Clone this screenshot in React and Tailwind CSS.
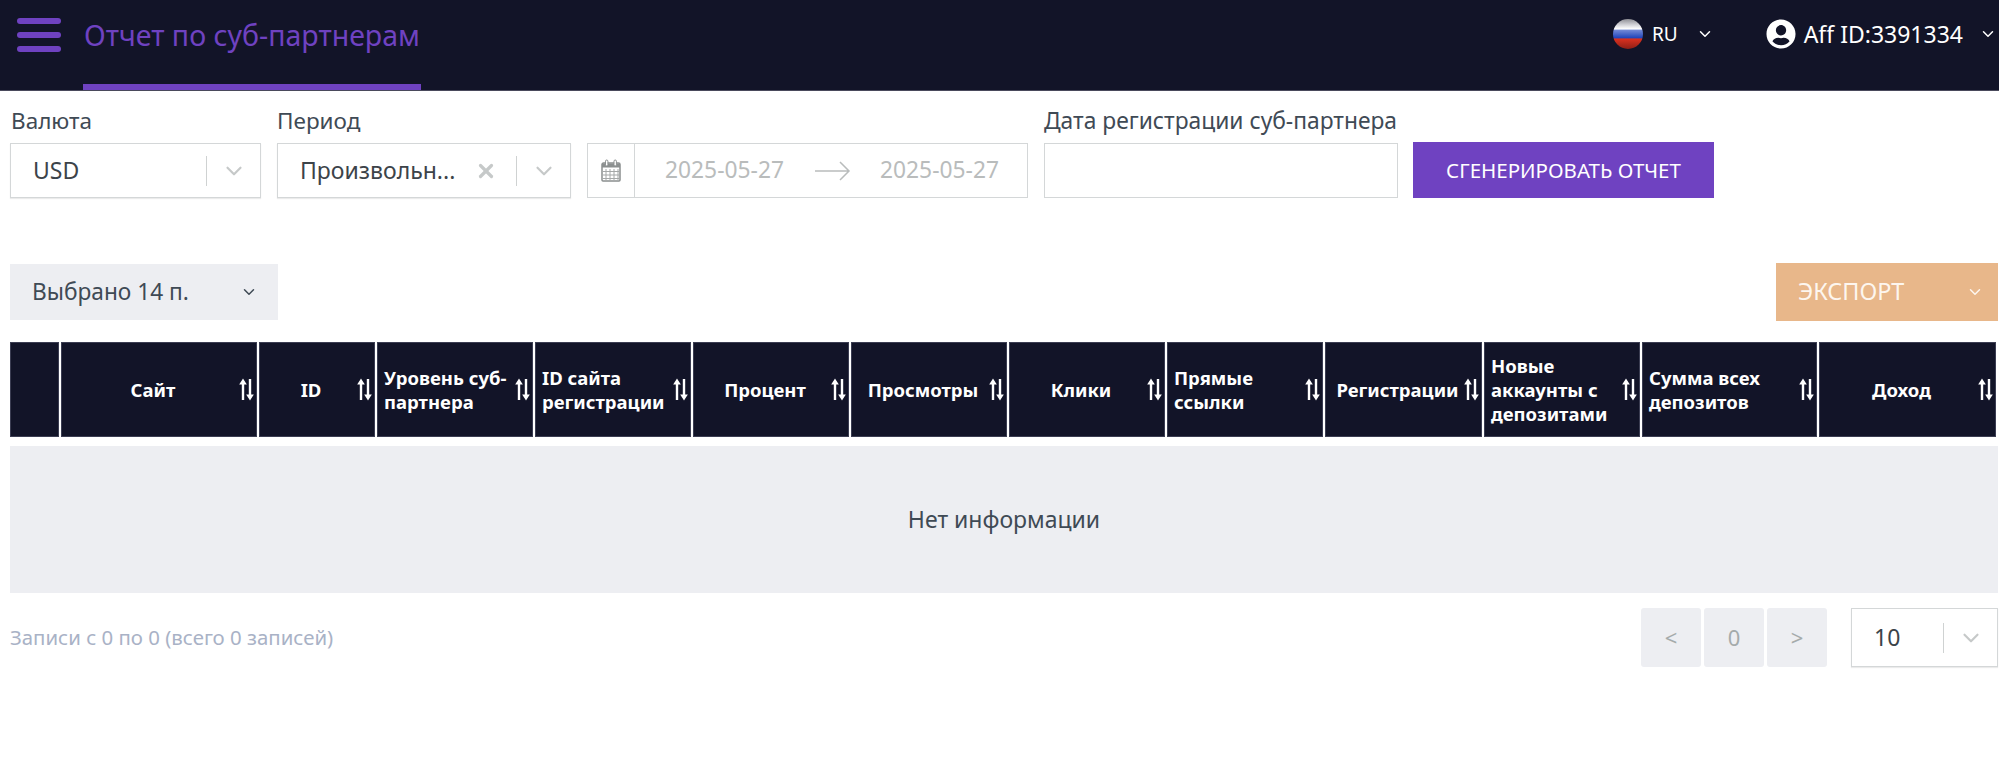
import React from 'react';
import { ChevronDown, X } from 'lucide-react';
import { FaUserCircle } from 'react-icons/fa';

const columns = [
  { title: '' },
  { title: 'Сайт', center: true },
  { title: 'ID', center: true },
  { title: 'Уровень суб-партнера' },
  { title: 'ID сайта регистрации' },
  { title: 'Процент', center: true },
  { title: 'Просмотры', center: true },
  { title: 'Клики', center: true },
  { title: 'Прямые ссылки' },
  { title: 'Регистрации', center: true },
  { title: 'Новые аккаунты с депозитами' },
  { title: 'Сумма всех депозитов' },
  { title: 'Доход', center: true },
];

const SortIcon = () => (
  <svg width="17" height="25" viewBox="0 0 17 25" className="shrink-0" fill="none">
    <path d="M5 23V4" stroke="#fff" strokeWidth="2.4" />
    <path d="M1.2 7.5 5 1.5 8.8 7.5Z" fill="#fff" />
    <path d="M12 2v19" stroke="#fff" strokeWidth="2.4" />
    <path d="M8.2 17.5 12 23.5 15.8 17.5Z" fill="#fff" />
  </svg>
);

const Flag = () => (
  <svg width="30" height="30" viewBox="0 0 30 30">
    <defs>
      <linearGradient id="gloss" x1="0" y1="0" x2="0" y2="1">
        <stop offset="0" stopColor="#8f8f95" />
        <stop offset="0.2" stopColor="#d5d5da" />
        <stop offset="0.33" stopColor="#ffffff" />
        <stop offset="0.38" stopColor="#6f86d6" />
        <stop offset="0.62" stopColor="#2347bb" />
        <stop offset="0.67" stopColor="#d8301f" />
        <stop offset="1" stopColor="#8e1f16" />
      </linearGradient>
    </defs>
    <circle cx="15" cy="15" r="15" fill="url(#gloss)" />
  </svg>
);

const CalendarIcon = () => (
  <svg width="20" height="23" viewBox="0 0 20 23" fill="none">
    <path d="M1 5.5a1.5 1.5 0 0 1 1.5-1.5h15A1.5 1.5 0 0 1 19 5.5V21a1 1 0 0 1-1 1H2a1 1 0 0 1-1-1Z" fill="#fff" stroke="#8b8f8f" strokeWidth="1.5" />
    <path d="M1 4.5h18v4H1Z" fill="#8b8f8f" />
    <path d="M5 10v11M9 10v11M13 10v11M17 10v11M2 12.5h16M2 16h16M2 19.5h16" stroke="#a5a8a8" strokeWidth="1" />
    <rect x="4.5" y="1" width="2.4" height="6" rx="1.2" fill="#fff" stroke="#8b8f8f" />
    <rect x="13" y="1" width="2.4" height="6" rx="1.2" fill="#fff" stroke="#8b8f8f" />
  </svg>
);

const SelectBox = ({ value, className, clearable }) => (
  <div className={`flex items-center border border-[#d4d7d8] bg-white shadow-[0_1px_1px_rgba(0,0,0,0.08)] ${className}`}>
    <span className="flex-1 truncate pl-[22px] text-[23px] text-[#3c4349]">{value}</span>
    {clearable && <X size={22} strokeWidth={3.5} className="mr-[19px] text-[#c6c9c9]" />}
    <span className="h-[30px] w-px bg-[#cfd2d2]" />
    <span className="flex w-[53px] justify-center">
      <ChevronDown size={26} strokeWidth={2} className="text-[#c6c9c9]" />
    </span>
  </div>
);

const App = () => {
  return (
    <div className="min-h-[775px] bg-white font-['Noto_Sans',sans-serif] text-[#3f4a55]">
      {/* Top bar */}
      <header className="flex h-[91px] items-start justify-between border-b border-[#4a4a5c] bg-[#121428]">
        <div className="flex h-[90px] items-start">
          <div className="ml-[17px] mt-[18px] flex w-[44px] flex-col gap-[8px]">
            <span className="h-[6px] rounded-full bg-[#6f42c1]" />
            <span className="h-[6px] rounded-full bg-[#6f42c1]" />
            <span className="h-[6px] rounded-full bg-[#6f42c1]" />
          </div>
          <div className="ml-[22px] flex h-[90px] w-[338px] items-start justify-center whitespace-nowrap border-b-[6px] border-[#6f42c1] pt-[15px] text-[28.5px] leading-[40px] text-[#6f42c1]">
            Отчет по суб-партнерам
          </div>
        </div>
        <div className="flex items-center pt-[19px] text-white">
          <Flag />
          <span className="ml-[9px] text-[19px] leading-[30px]">RU</span>
          <ChevronDown size={18} strokeWidth={2} className="ml-[18px]" />
          <FaUserCircle size={30} className="ml-[52px]" />
          <span className="ml-[8px] text-[23px] leading-[30px]">Aff ID:3391334</span>
          <ChevronDown size={18} strokeWidth={2} className="ml-[16px] mr-[2px]" />
        </div>
      </header>

      <main className="pl-[10px] pr-px">
        {/* Filters */}
        <div className="flex items-end pt-[12px]">
          <div className="w-[251px]">
            <div className="h-[40px] pl-px text-[22.5px] leading-[36px]">Валюта</div>
            <SelectBox value="USD" className="h-[55px]" />
          </div>
          <div className="ml-[16px] w-[294px]">
            <div className="h-[40px] text-[22.5px] leading-[36px]">Период</div>
            <SelectBox value="Произвольн..." className="h-[55px]" clearable />
          </div>
          <div className="ml-[16px] flex h-[55px] w-[441px] items-center border border-[#d4d7d8] text-[22.8px] text-[#b9bcbc]">
            <span className="flex h-full w-[47px] items-center justify-center border-r border-[#d4d7d8]">
              <CalendarIcon />
            </span>
            <span className="ml-[30px]">2025-05-27</span>
            <svg width="36" height="22" viewBox="0 0 36 22" fill="none" className="ml-[31px]">
              <path d="M0 11h34M25 2l9 9-9 9" stroke="#b9bcbc" strokeWidth="1.5" />
            </svg>
            <span className="ml-[29px]">2025-05-27</span>
          </div>
          <div className="ml-[16px] w-[354px]">
            <div className="h-[40px] whitespace-nowrap text-[22.8px] leading-[36px]">Дата регистрации суб-партнера</div>
            <div className="h-[55px] border border-[#d4d7d8] bg-white" />
          </div>
          <button className="ml-[15px] h-[56px] w-[301px] bg-[#6f42c1] text-[20.5px] text-white">
            СГЕНЕРИРОВАТЬ ОТЧЕТ
          </button>
        </div>

        {/* Columns picker and export */}
        <div className="mt-[65px] flex items-center justify-between">
          <div className="flex h-[56px] w-[268px] items-center justify-between bg-[#edeef2] pl-[22px] pr-[20px] text-[22.7px]">
            Выбрано 14 п.
            <ChevronDown size={18} strokeWidth={2} />
          </div>
          <div className="flex h-[58px] w-[222px] items-center justify-between bg-[#e8b78a] pl-[22px] pr-[14px] text-[23.4px] text-[#fdf6ef]">
            ЭКСПОРТ
            <ChevronDown size={18} strokeWidth={2} />
          </div>
        </div>

        {/* Table head */}
        <div className="mt-[21px] grid h-[95px] grid-cols-[51px_198px_118px_158px_158px_158px_158px_158px_158px_159px_158px_177px_1fr]">
          {columns.map((col, i) => (
            <div
              key={i}
              className={`flex items-center border-r-2 border-white bg-[#121428] pl-[7px] pr-[2px] text-[18.5px] font-bold leading-[24px] text-white shadow-[inset_0_0_0_1px_#3b3d52] ${i === 12 ? 'border-r-0' : ''}`}
            >
              {col.title && (
                <>
                  <span className={`min-w-0 flex-1 ${col.center ? 'text-center' : ''}`}>{col.title}</span>
                  <SortIcon />
                </>
              )}
            </div>
          ))}
        </div>

        {/* Empty state */}
        <div className="mt-[9px] flex h-[147px] items-center justify-center bg-[#edeef2] text-[23px]">
          Нет информации
        </div>

        {/* Footer */}
        <div className="mt-[15px] flex items-center justify-between">
          <span className="text-[20.4px] text-[#a9b2c6]">Записи с 0 по 0 (всего 0 записей)</span>
          <div className="flex items-center">
            <div className="flex gap-[3px] text-[22px] text-[#a5abab]">
              <span className="flex h-[59px] w-[60px] items-center justify-center rounded-[3px] bg-[#edeef2]">&lt;</span>
              <span className="flex h-[59px] w-[60px] items-center justify-center rounded-[3px] bg-[#edeef2]">0</span>
              <span className="flex h-[59px] w-[60px] items-center justify-center rounded-[3px] bg-[#edeef2]">&gt;</span>
            </div>
            <SelectBox value="10" className="ml-[24px] h-[59px] w-[147px]" />
          </div>
        </div>
      </main>
    </div>
  );
};

export default App;
